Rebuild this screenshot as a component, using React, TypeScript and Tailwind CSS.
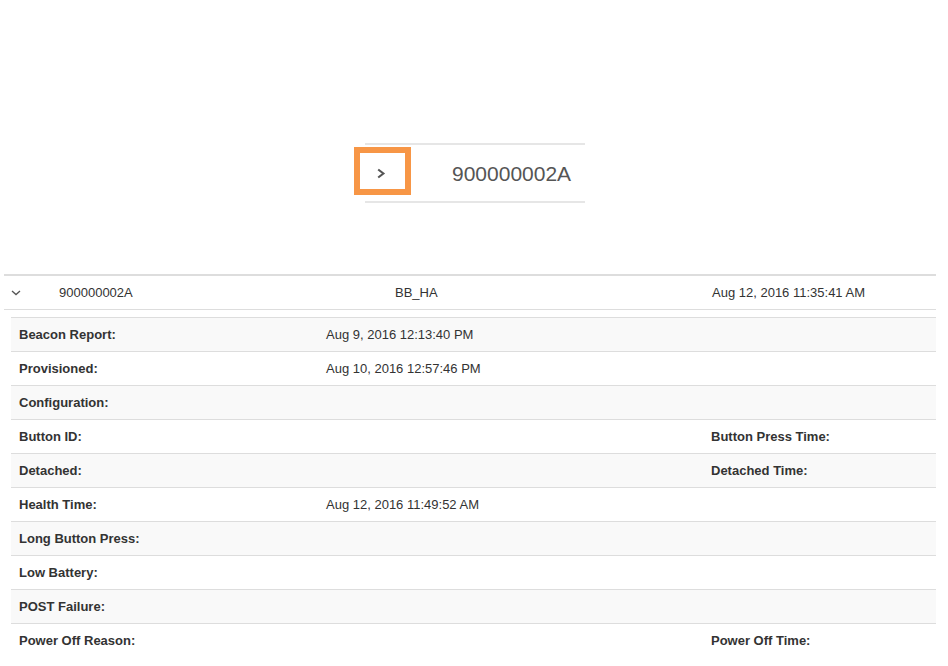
import React from "react";

type Row = { label: string; value?: string; label2?: string; value2?: string };

const rows: Row[] = [
  { label: "Beacon Report:", value: "Aug 9, 2016 12:13:40 PM" },
  { label: "Provisioned:", value: "Aug 10, 2016 12:57:46 PM" },
  { label: "Configuration:" },
  { label: "Button ID:", label2: "Button Press Time:" },
  { label: "Detached:", label2: "Detached Time:" },
  { label: "Health Time:", value: "Aug 12, 2016 11:49:52 AM" },
  { label: "Long Button Press:" },
  { label: "Low Battery:" },
  { label: "POST Failure:" },
  { label: "Power Off Reason:", label2: "Power Off Time:" },
];

function ChevronRight() {
  return (
    <svg width="10" height="11" viewBox="0 0 10 11" fill="none">
      <path d="M2.2 1.5 L7.4 5.5 L2.2 9.5" stroke="#555" strokeWidth="2.1" strokeLinecap="butt" strokeLinejoin="miter" />
    </svg>
  );
}

function ChevronDown() {
  return (
    <svg width="10" height="6" viewBox="0 0 10 6" fill="none">
      <path d="M1 1 L5 4.6 L9 1" stroke="#555" strokeWidth="1.3" />
    </svg>
  );
}

export default function App() {
  return (
    <div className="w-[948px] min-h-[666px] bg-white text-[#333]" style={{ fontFamily: '"Liberation Sans", Arial, sans-serif' }}>
      {/* Callout */}
      <div className="pt-[143px] flex justify-center">
        <div className="relative w-[220px] ml-[2px] border-y-2 border-[#e6e6e6]">
          <div className="h-[56px] flex items-center">
            <div className="w-[87px] pl-[11px] flex items-center">
              <ChevronRight />
            </div>
            <div className="text-[21px] text-[#555] leading-none">900000002A</div>
          </div>
          <div className="absolute left-[-11px] top-[2px] w-[57px] h-[48px] border-[6px] border-[#f79646]" />
        </div>
      </div>

      {/* Table */}
      <div className="mt-[71px] ml-[4px] w-[932px]">
        <div className="border-t-2 border-b border-[#dddddd] h-[36px] flex items-center text-[13px] pl-[7px]">
          <div className="w-[48px] flex items-center pt-[1px]">
            <ChevronDown />
          </div>
          <div className="w-[336px]">900000002A</div>
          <div className="w-[317px]">BB_HA</div>
          <div>Aug 12, 2016 11:35:41 AM</div>
        </div>
        <div className="pl-[7px] pt-[7px]">
          <div className="w-[925px] text-[13px]">
            {rows.map((r, i) => (
              <div
                key={r.label}
                className={`flex items-center h-[34px] border-t border-[#dddddd] ${i % 2 === 0 ? "bg-[#f9f9f9]" : "bg-white"}`}
              >
                <div className="w-[307px] pl-[8px] font-bold">{r.label}</div>
                <div className="w-[385px] pl-[8px]">{r.value ?? ""}</div>
                <div className="pl-[8px] font-bold">{r.label2 ?? ""}</div>
              </div>
            ))}
          </div>
        </div>
      </div>
    </div>
  );
}
